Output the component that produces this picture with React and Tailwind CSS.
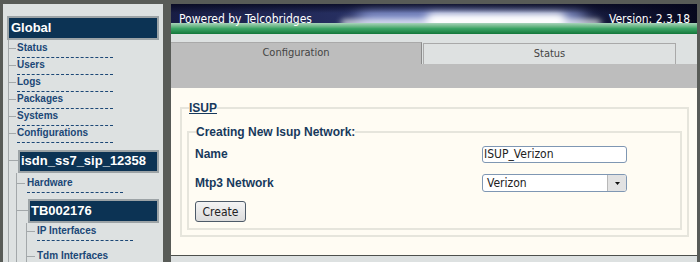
import React from 'react';

const sans = { fontFamily: '"Liberation Sans", Arial, sans-serif' };
const cond = { fontFamily: '"DejaVu Sans Condensed", "DejaVu Sans", sans-serif', fontStretch: 'condensed' };

function Tick({ w }) {
  return <span className="mt-[8px] h-px shrink-0 bg-[#a3a8aa]" style={{ width: w }} />;
}

function NavItem({ label, tick = 7, gap = 1, h = 17 }) {
  return (
    <div className="flex items-start" style={{ height: h }}>
      <Tick w={tick} />
      <div style={{ marginLeft: gap }}>
        <div className="pt-[2px] text-[10px] leading-[12px] font-bold whitespace-nowrap text-[#1b4776]">{label}</div>
        <div className="mt-[3px] w-[96px] border-b border-dashed border-[#1b4776]" />
      </div>
    </div>
  );
}

function NodeBox({ label, tick, width, h = 24 }) {
  return (
    <div className="flex items-start">
      <span className="h-px shrink-0 bg-[#a3a8aa]" style={{ width: tick, marginTop: h / 2 - 1 }} />
      <div
        className="flex items-center border-2 border-[#9ca3a6] bg-[#0c3354] pl-[1px] text-[13px] font-bold text-white"
        style={{ width, height: h }}
      >
        {label}
      </div>
    </div>
  );
}

function Sidebar() {
  return (
    <div className="flex h-full w-[160px] shrink-0 flex-col overflow-hidden bg-[#dde1e1] pt-[12px]" style={sans}>
      <div className="ml-[4px] flex h-[24px] w-[152px] items-center border-2 border-[#9ca3a6] bg-[#0c3354] pl-[2px] text-[13px] font-bold text-white">
        Global
      </div>
      <div className="ml-[5px] flex flex-1 flex-col border-l border-[#a3a8aa]">
        <NavItem label="Status" />
        <NavItem label="Users" />
        <NavItem label="Logs" />
        <NavItem label="Packages" />
        <NavItem label="Systems" />
        <NavItem label="Configurations" />
        <div className="mt-[8px]">
          <NodeBox label="isdn_ss7_sip_12358" tick={9} width={141} h={23} />
        </div>
        <div className="ml-[7px] flex flex-1 flex-col border-l border-[#a3a8aa] pt-[2px]">
          <NavItem label="Hardware" tick={8} gap={2} />
          <div className="mt-[7px]">
            <NodeBox label="TB002176" tick={11} width={131} />
          </div>
          <div className="ml-[9px] flex flex-1 flex-col border-l border-[#a3a8aa]">
            <NavItem label="IP Interfaces" tick={8} gap={2} h={25} />
            <NavItem label="Tdm Interfaces" tick={8} gap={2} />
          </div>
        </div>
      </div>
    </div>
  );
}

function Banner() {
  return (
    <div className="relative h-[30px] overflow-hidden bg-[#1a1e48] text-[12px] text-white" style={cond}>
      {/* sky */}
      <div className="absolute inset-0 bg-gradient-to-r from-[#181d44] via-[#2e3870] to-[#07081e]" />
      {/* glare */}
      <div className="absolute top-[5px] left-[185px] h-[24px] w-[230px] rounded-full bg-[#a4b4f0] opacity-80 blur-[8px]" />
      <div className="absolute top-[9px] left-[255px] h-[16px] w-[140px] rounded-full bg-white blur-[4px]" />
      <div className="absolute top-[16px] left-[170px] h-[6px] w-[260px] rounded-full bg-white opacity-90 blur-[3px]" />
      {/* top shade */}
      <div className="absolute inset-x-0 top-0 h-[9px] bg-gradient-to-b from-[#06071c] to-transparent opacity-80" />
      {/* green hill */}
      <div className="absolute inset-x-0 bottom-0 h-[11px] bg-gradient-to-b from-[#a8d4bb] via-[#3ba466] to-[#11773a]" />
      <div className="relative flex h-full items-center justify-between pl-[8px] pr-[7px] pb-[1px]">
        <span>Powered by Telcobridges</span>
        <span>Version: 2.3.18</span>
      </div>
    </div>
  );
}

function Tabs() {
  return (
    <div className="flex h-[30px] items-end bg-[#dde1e1] text-[11px] text-[#444]" style={cond}>
      <div className="flex h-[22px] w-[251px] items-center justify-center border-t border-r border-t-[#a9a9a9] border-r-[#8c8c8c] bg-[#bdbdbd]">
        Configuration
      </div>
      <div className="ml-[1px] flex h-[21px] w-[253px] items-center justify-center border border-b-0 border-[#a9a9a9] bg-[#dee1e1]">
        Status
      </div>
    </div>
  );
}

function Content() {
  return (
    <div className="h-[167px] bg-[#fffcf3] pt-[13px]">
      <fieldset className="ml-[9px] mr-[8px] border-2 border-[#e6e5dc] px-[5px] pt-[10px] pb-[5px]">
        <legend className="ml-[2px] text-[12px] leading-[14px] font-bold text-[#17395c] underline" style={sans}>
          ISUP
        </legend>
        <fieldset className="border-2 border-[#e6e5dc] pl-[6px] pr-[6px] pb-[6px]">
          <legend className="ml-[1px] text-[12px] leading-[14px] font-bold text-[#17395c]" style={sans}>
            Creating New Isup Network:
          </legend>
          <div className="mt-[6px] flex h-[18px] items-center">
            <span className="w-[287px] text-[12px] font-bold text-[#17395c]" style={sans}>Name</span>
            <div
              className="flex h-[17px] w-[145px] items-center rounded-[3px] border border-[#7f97b3] bg-white pl-[1px] text-[12px] text-[#222]"
              style={cond}
            >
              ISUP_Verizon
            </div>
          </div>
          <div className="mt-[11px] flex h-[18px] items-center">
            <span className="w-[287px] text-[12px] font-bold text-[#17395c]" style={sans}>Mtp3 Network</span>
            <div
              className="flex h-[18px] w-[145px] items-center overflow-hidden rounded-[3px] border border-[#7f97b3] bg-white text-[12px] text-[#222]"
              style={cond}
            >
              <span className="flex-1 pl-[4px]">Verizon</span>
              <span className="flex h-full w-[19px] items-center justify-center border-l border-[#b8b8b8] bg-[#e2e2e2]">
                <svg width="5" height="3" viewBox="0 0 5 3"><path d="M0 0h5L2.5 3z" fill="#111" /></svg>
              </span>
            </div>
          </div>
          <button
            className="mt-[9px] h-[21px] w-[51px] rounded-[3px] border border-[#4d5a68] bg-gradient-to-b from-[#f4f4f4] to-[#dcdcdc] text-[12px] text-[#222]"
            style={cond}
          >
            Create
          </button>
        </fieldset>
      </fieldset>
    </div>
  );
}

export default function App() {
  return (
    <div className="flex h-[262px] w-[700px] overflow-hidden bg-[#585b57] pt-[4px] pl-[3px]">
      <Sidebar />
      <div className="ml-[8px] flex w-[526px] flex-col">
        <Banner />
        <Tabs />
        <div className="h-[24px] bg-[#bdbdbd]" />
        <Content />
        <div className="flex-1 border-t border-[#4d504c] bg-[#dde1e1]" />
      </div>
    </div>
  );
}
